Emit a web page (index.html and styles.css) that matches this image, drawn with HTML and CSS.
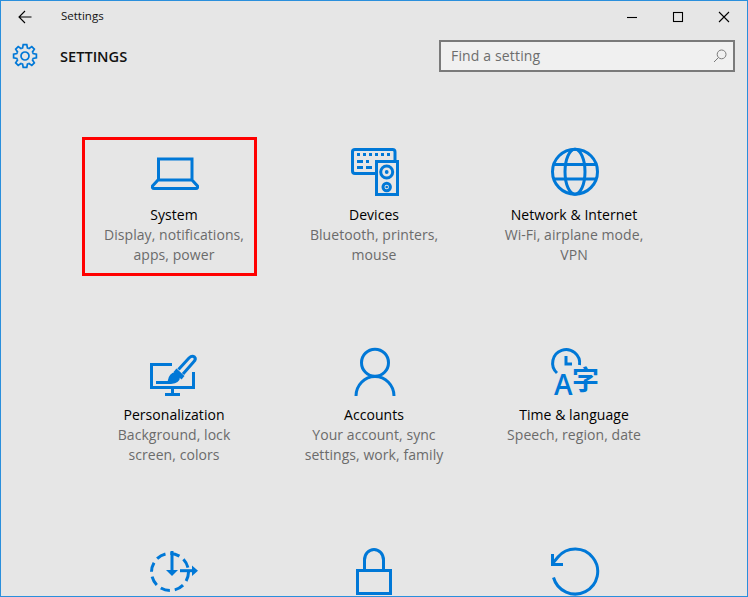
FILE: index.html
```html
<!DOCTYPE html>
<html lang="en">
<head>
<meta charset="utf-8">
<title>Settings</title>
<link rel="stylesheet" href="styles.css">
</head>
<body>
<div class="window">
  <div class="titlebar">
    <button class="back" aria-label="Back">
      <svg width="14" height="14" viewBox="0 0 14 14"><path class="thin" d="M1 7H13.500M7 1L1 7L7 13"/></svg>
    </button>
    <span class="wintitle">Settings</span>
    <div class="controls">
      <span class="ctl"><svg width="12" height="12" viewBox="0 0 12 12"><path class="thin" d="M1 6.500H11"/></svg></span>
      <span class="ctl"><svg width="12" height="12" viewBox="0 0 12 12"><rect class="thin" x="1.500" y="1.500" width="9" height="9"/></svg></span>
      <span class="ctl"><svg width="12" height="12" viewBox="0 0 12 12"><path class="thin" d="M1 1L11 11M11 1L1 11"/></svg></span>
    </div>
  </div>

  <header class="header">
    <div class="brand">
      <svg class="gear" width="26" height="26" viewBox="-13 -13 26 26">
        <defs><path id="tooth" d="M-3.250 -7.850L-2.400 -8.200L-1.800 -11.400H1.800L2.400 -8.200L3.250 -7.850"/></defs>
        <g class="line2">
          <use href="#tooth"/>
          <use href="#tooth" transform="rotate(45)"/>
          <use href="#tooth" transform="rotate(90)"/>
          <use href="#tooth" transform="rotate(135)"/>
          <use href="#tooth" transform="rotate(180)"/>
          <use href="#tooth" transform="rotate(225)"/>
          <use href="#tooth" transform="rotate(270)"/>
          <use href="#tooth" transform="rotate(315)"/>
          <circle r="4"/>
        </g>
      </svg>
      <h1 class="pagetitle">SETTINGS</h1>
    </div>
    <div class="search">
      <span class="placeholder">Find a setting</span>
      <svg width="14" height="14" viewBox="0 0 14 14"><circle class="glass" cx="8.600" cy="5.400" r="4.400"/><path class="glass" d="M5.400 8.600L1 13"/></svg>
    </div>
  </header>

  <main class="grid">
    <section class="tile">
      <svg class="icon" viewBox="149 146 50 50"><path class="ln" d="M158.500 179V159H192V179M158 180H192L197.500 186Q198 188.500 196 188.500H154Q152 188.500 152.500 186Z"/></svg>
      <h2>System</h2>
      <p>Display, notifications,<br>apps, power</p>
      <div class="highlight"></div>
    </section>
    <section class="tile">
      <svg class="icon" viewBox="349 146 50 50">
        <path class="ln" d="M375 173.500H355Q352.500 173.500 352.500 171V151.500Q352.500 149.500 355 149.500H392.500Q395 149.500 395 152V160"/>
        <rect class="ln" x="376.500" y="161.500" width="21" height="33"/>
        <circle class="ln" cx="386.700" cy="172" r="6"/><circle class="fill" cx="386.700" cy="172" r="1.900"/>
        <circle class="ln" cx="386.700" cy="187" r="3.700"/><circle class="fill" cx="386.700" cy="187" r="1.300"/>
        <path class="keys" d="M357 153h3v3h-3zM363 153h3v3h-3zM369 153h3v3h-3zM375 153h3v3h-3zM381 153h3v3h-3zM387 153h3v3h-3zM357 160h6v3h-6zM366 160h3v3h-3zM357 166h6v3h-6zM366 166h6v3h-6z"/>
      </svg>
      <h2>Devices</h2>
      <p>Bluetooth, printers,<br>mouse</p>
    </section>
    <section class="tile">
      <svg class="icon" viewBox="549 146 50 50">
        <circle class="ln" cx="575" cy="171.700" r="22.500"/>
        <ellipse class="ln" cx="575" cy="171.700" rx="10" ry="22.500"/>
        <path class="ln" d="M553 164.500H597M553 179H597"/>
      </svg>
      <h2>Network &amp; Internet</h2>
      <p>Wi-Fi, airplane mode,<br>VPN</p>
    </section>
    <section class="tile">
      <svg class="icon" viewBox="149 346 50 50">
        <path class="ln" d="M172 364.500H151.500V387.500H193.500V372M172.500 388V394M165 394.500H180"/>
        <path class="ln" d="M156 382.500H170"/>
        <path class="ln" d="M178.500 369.500L189 358Q192 355 194.500 357Q196.500 359 193.500 362L183 374"/>
        <path class="fill" d="M176.500 368.500L184.500 376L181.500 379.500L173.500 372Z"/>
        <path class="fill" d="M168 380Q169 373.500 175 372L180 377Q180 383 171 384L164 384Q167.500 383.500 168 380Z"/>
      </svg>
      <h2>Personalization</h2>
      <p>Background, lock<br>screen, colors</p>
    </section>
    <section class="tile">
      <svg class="icon" viewBox="349 346 50 50">
        <circle class="ln" cx="375" cy="362.700" r="13.500"/>
        <path class="ln" d="M356 396A19 19.500 0 0 1 394 396"/>
      </svg>
      <h2>Accounts</h2>
      <p>Your account, sync<br>settings, work, family</p>
    </section>
    <section class="tile">
      <svg class="icon" viewBox="549 346 50 50">
        <path class="ln" d="M557 373A13.500 13.500 0 1 1 579.500 365M566 356V364H572"/>
        <text class="glyph glyph-a" x="554" y="395">A</text>
        <text class="glyph glyph-z" x="572" y="390">字</text>
      </svg>
      <h2>Time &amp; language</h2>
      <p>Speech, region, date</p>
    </section>
    <section class="tile">
      <svg class="icon" viewBox="149 546 50 50">
        <circle class="ln dash" cx="170" cy="572" r="18.500"/>
        <path class="ln" d="M172 551V572"/><path class="fill" d="M166 570H178L172 576Z"/>
        <path class="ln" d="M180 570.700H193"/><path class="fill" d="M192 565.500L198 570.700L192 576Z"/>
      </svg>
    </section>
    <section class="tile">
      <svg class="icon" viewBox="349 546 50 50">
        <path class="ln" d="M364.500 570V560A9.500 10.500 0 0 1 383.500 560V570"/>
        <rect class="ln" x="357.500" y="570.500" width="33" height="23"/>
      </svg>
    </section>
    <section class="tile">
      <svg class="icon" viewBox="549 546 50 50">
        <path class="ln" d="M553.500 577.500A22.500 22.500 0 1 0 558 557L553 563M552.500 554V564.500H563"/>
      </svg>
    </section>
  </main>
</div>
</body>
</html>
```
FILE: styles.css
```css
* { box-sizing: border-box; }
html, body { margin: 0; padding: 0; }
body { font-family: "Open Sans", "Noto Sans", sans-serif; background: #e6e6e6; }

.window {
  width: 748px;
  height: 597px;
  border: 1px solid #2a8fdc;
  background: #e6e6e6;
  overflow: hidden;
}

.titlebar { display: flex; align-items: center; height: 31px; }
.back {
  width: 48px; height: 31px; padding: 0; border: 0; background: none;
  display: flex; align-items: center; justify-content: center;
}
.wintitle { margin: 0 0 2px 12px; font-size: 11.500px; color: #111; }
.controls { margin-left: auto; display: flex; }
.ctl { width: 46px; height: 31px; display: flex; align-items: center; justify-content: center; }
.thin { fill: none; stroke: #000; stroke-width: 1.100; }

.header { display: flex; align-items: center; justify-content: space-between; height: 32px; margin-top: 8px; padding-right: 12px; }
.brand { display: flex; align-items: center; }
.gear { margin-left: 11px; }
.line2 { fill: none; stroke: #0078d7; stroke-width: 1.700; }
.pagetitle { margin: 0 0 1px 22px; font-size: 14.600px; font-weight: 600; color: #111; }

.search {
  width: 296px; height: 32px;
  display: flex; align-items: center; justify-content: space-between;
  padding: 0 6px 0 10px;
  border: 2px solid #7a7a7a;
  background: #f0f0f0;
}
.placeholder { margin-bottom: 2px; font-size: 14px; letter-spacing: 0.150px; color: #6d6d6d; }
.glass { fill: none; stroke: #7a7a7a; stroke-width: 1; }

.grid {
  display: grid;
  grid-template-columns: repeat(3, 200px);
  grid-auto-rows: 200px;
  margin: 65px 0 0 73px;
}
.tile {
  position: relative;
  display: flex; flex-direction: column; align-items: center;
  padding-top: 9px;
  text-align: center;
}
.icon { width: 50px; height: 50px; margin-bottom: 9px; overflow: visible; flex: none; }
.ln { fill: none; stroke: #0078d7; stroke-width: 3; }
.fill, .keys { fill: #0078d7; }
.dash { stroke-dasharray: 9.500 5; }
.glyph { fill: #0078d7; }
.glyph-a { font: 600 28px "Open Sans", sans-serif; }
.glyph-z { font: 700 27px "Noto Sans CJK SC", sans-serif; }

.tile h2 { margin: 0; font-size: 14px; letter-spacing: 0.050px; font-weight: 400; line-height: 20px; color: #000; }
.tile p { margin: 0; font-size: 14px; letter-spacing: 0.060px; line-height: 20px; color: #6b6b6b; }

.highlight {
  position: absolute;
  left: 8px; top: 0;
  width: 175px; height: 139px;
  border: 3px solid #f00;
}
```
